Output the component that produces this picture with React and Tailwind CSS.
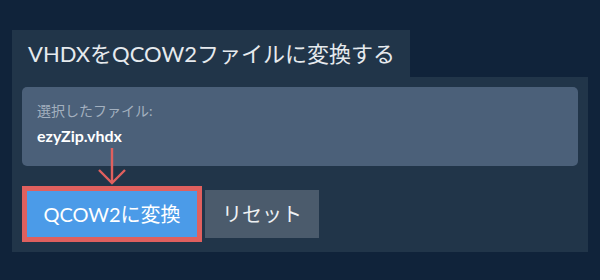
export default function App() {
    const font = { fontFamily: 'Lato, "Noto Sans CJK JP", sans-serif' };
    return (
        <div className="w-[600px] h-[280px] bg-[#10233a] pt-[30px] pl-[12px]" style={font}>
            <div className="w-[398px] h-[47px] bg-[#213549] flex items-center pl-[16px]">
                <h1 className="text-[22px] leading-none text-[#e6eaee] font-normal">VHDXをQCOW2ファイルに変換する</h1>
            </div>
            <div className="relative w-[576px] bg-[#213549] pt-[10px] pb-[10px] px-[10px]">
                <div className="rounded-[5px] bg-[#4b6079] h-[79px] px-[15px] pt-[14px]">
                    <div className="text-[14px] leading-[20px] text-[#a3b0bf]">選択したファイル:</div>
                    <div className="mt-[4px] text-[16px] leading-[22px] font-bold text-white">ezyZip.vhdx</div>
                </div>
                <svg className="absolute left-[85px] top-[70px]" width="30" height="38" viewBox="0 0 30 38" fill="none">
                    <path d="M15 1 V35" stroke="#e0605e" strokeWidth="2.4" />
                    <path d="M2 23 L15 36 L28 23" stroke="#e0605e" strokeWidth="2.4" strokeLinejoin="miter" />
                </svg>
                <div className="flex items-center gap-[3px] mt-[20px]">
                    <button className="w-[180px] h-[56px] border-[5px] border-[#e0605e] bg-[#4b9be8] text-white text-[20px] leading-none flex items-center justify-center">
                        QCOW2に変換
                    </button>
                    <button className="w-[114px] h-[48px] bg-[#4b5b6c] text-[#eef1f4] text-[20px] leading-none flex items-center justify-center">
                        リセット
                    </button>
                </div>
            </div>
        </div>
    );
}
